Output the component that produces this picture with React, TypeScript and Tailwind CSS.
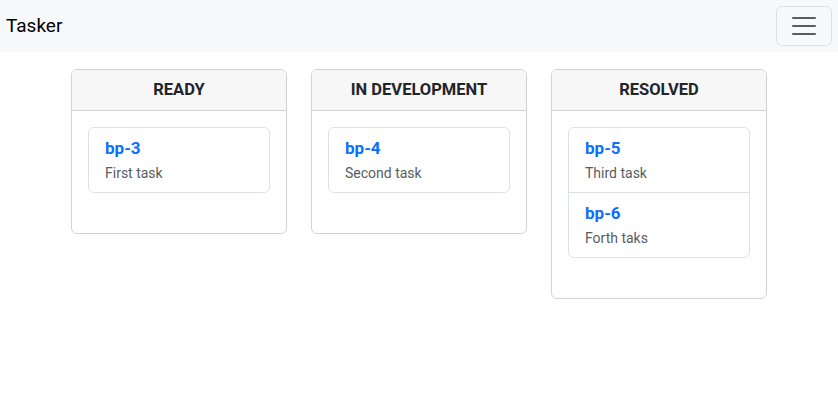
import type { ReactNode } from 'react'

type Task = { key: string; title: string }

const columns: { name: string; tasks: Task[] }[] = [
  { name: 'READY', tasks: [{ key: 'bp-3', title: 'First task' }] },
  { name: 'IN DEVELOPMENT', tasks: [{ key: 'bp-4', title: 'Second task' }] },
  {
    name: 'RESOLVED',
    tasks: [
      { key: 'bp-5', title: 'Third task' },
      { key: 'bp-6', title: 'Forth taks' },
    ],
  },
]

function Toggler() {
  return (
    <button className="w-[56px] h-[40px] flex items-center justify-center rounded-[6px] border border-black/10">
      <svg width="30" height="30" viewBox="0 0 30 30">
        <path
          d="M4 7h22M4 15h22M4 23h22"
          stroke="rgba(33,37,41,0.75)"
          strokeWidth="2"
          strokeLinecap="round"
          strokeMiterlimit="10"
        />
      </svg>
    </button>
  )
}

function Column({ name, children }: { name: string; children: ReactNode }) {
  return (
    <div className="w-[216px] self-start rounded-[6px] border border-[#d3d3d4] bg-white">
      <div className="h-[41px] flex items-center justify-center border-b border-[#d3d3d4] bg-[#f7f7f7] rounded-t-[5px] text-[16.5px] font-bold text-[#212529]">
        {name}
      </div>
      <div className="p-4">
        <ul className="mb-6 rounded-[6px] border border-[#dee2e6]">{children}</ul>
      </div>
    </div>
  )
}

export default function App() {
  return (
    <div className="min-h-screen bg-white text-[#212529] font-['Roboto',sans-serif]">
      {/* navbar */}
      <nav className="h-[52px] bg-[#f8f9fa] flex items-center justify-between px-[6px]">
        <span className="text-[19px] text-black">Tasker</span>
        <Toggler />
      </nav>

      {/* board */}
      <div className="w-[696px] mx-auto mt-[17px] flex gap-6">
        {columns.map((col) => (
          <Column key={col.name} name={col.name}>
            {col.tasks.map((t, i) => (
              <li
                key={t.key}
                className={`px-4 pt-[10px] pb-[8px] ${i > 0 ? 'border-t border-[#dee2e6]' : ''}`}
              >
                <div className="text-[17px] leading-[21px] font-bold text-[#0d6efd] mb-[4px]">{t.key}</div>
                <div className="text-[14px] leading-[21px] text-[#595c5f]">{t.title}</div>
              </li>
            ))}
          </Column>
        ))}
      </div>
    </div>
  )
}
